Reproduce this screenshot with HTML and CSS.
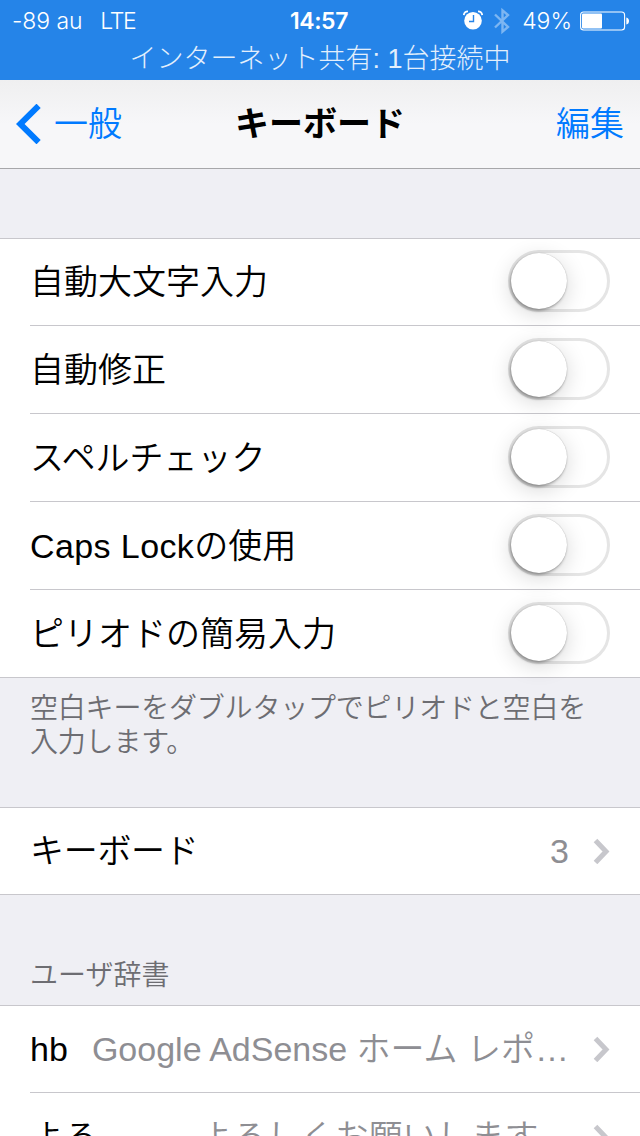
FILE: index.html
```
<!DOCTYPE html>
<html lang="ja">
<head>
  <meta charset="UTF-8" />
  <meta name="viewport" content="width=device-width, initial-scale=1" />
  <title>キーボード</title>
  <link rel="stylesheet" href="styles.css">
</head>
<body>
  <header class="status-bar">
    <div class="status-row">
      <div class="status-left">
        <span class="carrier">-89 au</span>
        <span class="network">LTE</span>
      </div>
      <div class="time">14:57</div>
      <div class="status-right">
        <svg class="alarm" width="20" height="20" viewBox="0 0 20 20">
          <circle cx="10" cy="10.8" r="8.8" fill="#fff"/>
          <path d="M0.8 5A4.2 4.2 0 0 1 5 1.4M15 1.4A4.2 4.2 0 0 1 19.2 5" fill="none" stroke="#fff" stroke-width="1.8"/>
          <path d="M10.5 5v6.5H6" fill="none" stroke="#2584e8" stroke-width="1.4"/>
        </svg>
        <svg class="bluetooth" width="16" height="28" viewBox="0 0 16 28">
          <path d="M1 7.5L14 20L8.5 24.7V3.3L14 8L1 20.5" fill="none" stroke="#7db6f2" stroke-width="2.4"/>
        </svg>
        <span class="percent">49%</span>
        <svg class="battery" width="50" height="20" viewBox="0 0 50 20">
          <rect x="0.6" y="1" width="44" height="18" rx="3" fill="none" stroke="#fff" stroke-width="1.1"/>
          <rect x="2" y="2.5" width="20" height="15" rx="1" fill="#fff"/>
          <path d="M46.3 6.5q2.7 0.5 2.7 3.5t-2.7 3.5z" fill="#fff"/>
        </svg>
      </div>
    </div>
    <div class="tethering">インターネット共有: 1台接続中</div>
  </header>

  <nav class="nav-bar">
    <a class="back" href="#">
      <svg width="25" height="40" viewBox="0 0 25 40">
        <path d="M22.6 1.8L4.2 20L22.6 38.2" fill="none" stroke="#007aff" stroke-width="6"/>
      </svg>
      <span>一般</span>
    </a>
    <h1>キーボード</h1>
    <a class="edit" href="#">編集</a>
  </nav>

  <main>
    <section class="group">
      <div class="row"><span class="label">自動大文字入力</span><span class="switch"></span></div>
      <div class="row"><span class="label">自動修正</span><span class="switch"></span></div>
      <div class="row"><span class="label">スペルチェック</span><span class="switch"></span></div>
      <div class="row"><span class="label"><span class="latin">Caps Lock</span>の使用</span><span class="switch"></span></div>
      <div class="row"><span class="label">ピリオドの簡易入力</span><span class="switch"></span></div>
    </section>
    <p class="group-footer">空白キーをダブルタップでピリオドと空白を<br>入力します。</p>

    <section class="group">
      <div class="row">
        <span class="label kana">キーボード</span>
        <span class="value">3</span>
        <svg class="chevron" width="17" height="26" viewBox="0 0 17 26"><path d="M2.5 2.5L13 13.5L2.5 24.5" fill="none" stroke="#c7c7cc" stroke-width="5"/></svg>
      </div>
    </section>

    <h2 class="group-header">ユーザ辞書</h2>
    <section class="group">
      <div class="row">
        <span class="label">hb</span>
        <span class="value">Google AdSense ホーム レポ…</span>
        <svg class="chevron" width="17" height="26" viewBox="0 0 17 26"><path d="M2.5 2.5L13 13.5L2.5 24.5" fill="none" stroke="#c7c7cc" stroke-width="5"/></svg>
      </div>
      <div class="row">
        <span class="label">よろ</span>
        <span class="value">よろしくお願いします。</span>
        <svg class="chevron" width="17" height="26" viewBox="0 0 17 26"><path d="M2.5 2.5L13 13.5L2.5 24.5" fill="none" stroke="#c7c7cc" stroke-width="5"/></svg>
      </div>
    </section>
  </main>
</body>
</html>
```

FILE: styles.css
```
* { box-sizing: border-box; }

body {
  margin: 0;
  width: 640px;
  height: 1136px;
  overflow: hidden;
  background: #efeff4;
  color: #000;
  font-family: "Liberation Sans", "Noto Sans CJK JP", sans-serif;
  font-weight: 350;
}

a {
  color: #007aff;
  text-decoration: none;
}

/* status bar */
.status-bar {
  height: 80px;
  background: #2584e8;
  color: #fff;
}

.status-row {
  display: grid;
  grid-template-columns: 1fr auto 1fr;
  align-items: center;
  height: 42px;
  padding: 0 10px 0 12px;
  font-family: Inter, sans-serif;
  font-size: 23px;
  font-weight: 300;
}

.status-left {
  display: flex;
  gap: 18px;
}

.carrier {
  letter-spacing: -0.1px;
}

.network {
  letter-spacing: -1.4px;
}

.time {
  margin-right: 4px;
  font-weight: 600;
  letter-spacing: -0.4px;
}

.status-right {
  display: flex;
  justify-content: flex-end;
  align-items: center;
}

.alarm {
  margin-bottom: 2px;
}

.bluetooth {
  margin: 0 12px 1px 11px;
}

.percent {
  margin-right: 8px;
}

.battery {
  margin-bottom: 1px;
}

.tethering {
  height: 38px;
  line-height: 35px;
  text-align: center;
  font-size: 27px;
  font-weight: 300;
  color: #e3effc;
}

/* navigation bar */
.nav-bar {
  display: grid;
  grid-template-columns: 1fr auto 1fr;
  align-items: center;
  height: 89px;
  padding: 0 16px;
  background: linear-gradient(#efeff0, #f7f7f9 50%);
  border-bottom: 1px solid #a7a7aa;
  font-size: 34px;
  line-height: 50px;
}

.back {
  display: flex;
  align-items: center;
  gap: 13px;
}

.nav-bar h1 {
  margin: 0;
  font-size: 34px;
  font-weight: 700;
}

.edit {
  text-align: right;
}

/* grouped table */
main {
  padding-top: 69px;
}

.group {
  background: #fff;
  box-shadow: inset 0 1px #c8c7cc, inset 0 -1px #c8c7cc;
}

.row {
  display: flex;
  align-items: center;
  height: 88px;
  margin-left: 30px;
  padding-right: 30px;
  border-bottom: 1px solid #c8c7cc;
  font-size: 34px;
  line-height: 50px;
  white-space: nowrap;
}

.kana {
  letter-spacing: -0.3px;
}

.latin {
  letter-spacing: 0.4px;
}

.value {
  margin-left: auto;
  color: #8e8e93;
}

.chevron {
  margin-left: 24px;
}

.switch {
  width: 102px;
  height: 62px;
  margin: 0 0 1px auto;
  border: 3px solid #e5e5e5;
  border-radius: 31px;
}

.switch::before {
  content: "";
  display: block;
  width: 56px;
  height: 56px;
  border-radius: 50%;
  background: #fff;
  box-shadow: 0 0 1px rgba(0, 0, 0, 0.3), -1px 2px 3px rgba(0, 0, 0, 0.3), 0 5px 22px rgba(0, 0, 0, 0.16);
}

.group-footer {
  height: 129px;
  margin: 0;
  padding: 14px 30px 0;
  font-size: 28px;
  line-height: 34px;
  letter-spacing: -0.2px;
  color: #6d6d72;
}

.group-header {
  height: 110px;
  margin: 0;
  padding: 63px 30px 0;
  font-size: 28px;
  font-weight: 350;
  line-height: 36px;
  color: #6d6d72;
}
```
